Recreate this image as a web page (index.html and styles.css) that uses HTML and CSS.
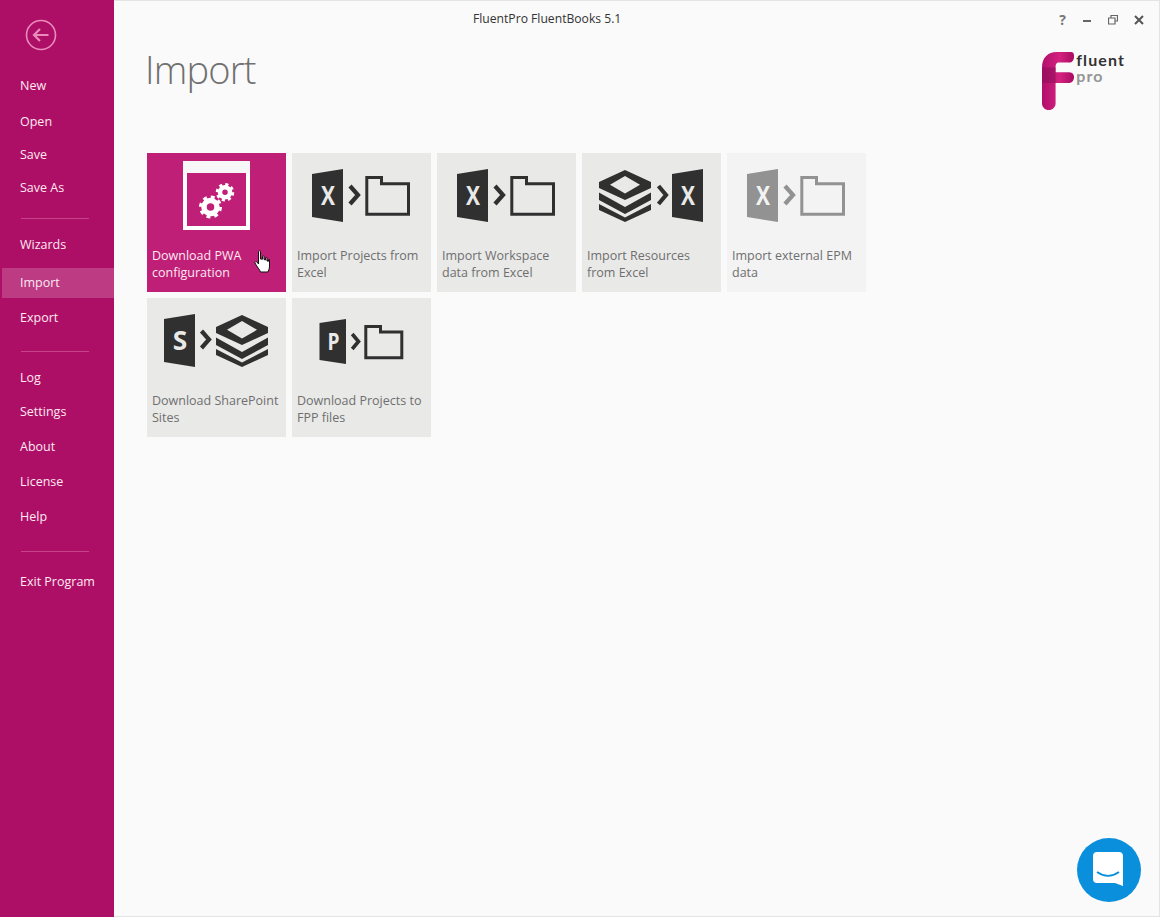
FILE: index.html
```html
<!DOCTYPE html>
<html lang="en">
<head>
<meta charset="utf-8">
<title>FluentPro FluentBooks 5.1</title>
<link rel="stylesheet" href="styles.css">
</head>
<body>
<svg class="sprite" width="0" height="0" aria-hidden="true">
  <defs>
    <symbol id="stack" viewBox="0 0 52 52">
      <path fill="currentColor" fill-rule="evenodd" d="M26 0 52 12V18L26 30 0 18V12ZM26 6 11 14.800 26 23.500 41 14.800Z"/>
      <path fill="currentColor" d="M0 22.500 26 37 52 22.500V30L26 44 0 30Z"/>
      <path fill="currentColor" d="M0 34 26 47.500 52 34V40L26 52 0 40Z"/>
    </symbol>
  </defs>
</svg>
<div class="window">
  <nav class="sidebar">
    <div class="back">
      <svg width="32" height="32" viewBox="0 0 32 32"><circle cx="16" cy="16" r="14.500" fill="none" stroke="#e98cbc" stroke-width="1.600"/><path d="M23.500 16H9M15 10l-6 6 6 6" fill="none" stroke="#e98cbc" stroke-width="2.200"/></svg>
    </div>
    <ul class="menu m-first">
      <li class="mi i-new">New</li>
      <li class="mi i-open">Open</li>
      <li class="mi i-save">Save</li>
      <li class="mi i-saveas">Save As</li>
    </ul>
    <hr class="sep">
    <ul class="menu">
      <li class="mi i-wiz">Wizards</li>
      <li class="mi active">Import</li>
      <li class="mi i-export">Export</li>
    </ul>
    <hr class="sep sep2">
    <ul class="menu">
      <li class="mi i-log">Log</li>
      <li class="mi i-set">Settings</li>
      <li class="mi i-std">About</li>
      <li class="mi i-std">License</li>
      <li class="mi i-std">Help</li>
    </ul>
    <hr class="sep sep3">
    <ul class="menu">
      <li class="mi i-exit">Exit Program</li>
    </ul>
  </nav>
  <main class="content">
    <div class="titlebar">
      <span class="apptitle">FluentPro FluentBooks 5.1</span>
      <div class="controls">
        <span class="help">?</span>
        <svg width="10" height="10" viewBox="0 0 10 10"><path d="M1 6h8" stroke="#666" stroke-width="2"/></svg>
        <svg width="10" height="10" viewBox="0 0 10 10"><path d="M3 2.500V.5h6.500v5.500H7.500M.5 3h6.500v6H.5Z" fill="none" stroke="#666" stroke-width="1.200"/></svg>
        <svg width="10" height="10" viewBox="0 0 10 10"><path d="M1 1l8 8M9 1l-8 8" stroke="#555" stroke-width="2"/></svg>
      </div>
    </div>
    <header class="head">
      <h1 class="title">Import</h1>
      <div class="logo">
        <svg class="logo-f" width="33" height="60" viewBox="0 0 34 60">
          <defs><linearGradient id="lg" x1="0" y1="0" x2="1" y2="0"><stop offset="0" stop-color="#b00f6c"/><stop offset=".55" stop-color="#d4217f"/><stop offset="1" stop-color="#a90d63"/></linearGradient></defs>
          <path fill="url(#lg)" d="M0 16C0 6 6 0 15 0H30C33 0 33 3 33 5S32 11 28 11H17C15 11 14 13 14 15V21H28C32 21 33 24 33 26S32 32 28 32H14V53C14 57 11 60 7 60S0 57 0 53Z"/>
          <path fill="#8d0c55" opacity=".55" d="M0 16H14V21H0ZM0 21H14V32H0Z"/>
        </svg>
        <div class="logo-text"><span class="lt1">fluent</span><span class="lt2">pro</span></div>
      </div>
    </header>
    <section class="tiles">
      <div class="tile hot">
        <svg class="ico" width="139" height="95" viewBox="0 0 139 95">
          <rect x="38" y="10" width="63" height="65" fill="none" stroke="#fff" stroke-width="4"/>
          <rect x="36" y="8" width="67" height="12" fill="#f7f7f7"/>
          <g fill="none" stroke="#fff">
            <circle cx="63.500" cy="54" r="6.500" stroke-width="5.500"/>
            <circle cx="63.500" cy="54" r="9.500" stroke-width="4" stroke-dasharray="3.700 3.760"/>
            <circle cx="78" cy="39.300" r="5" stroke-width="4.500"/>
            <circle cx="78" cy="39.300" r="7.500" stroke-width="3.500" stroke-dasharray="3 2.890"/>
          </g>
        </svg>
        <span class="lbl">Download PWA configuration</span>
        <svg class="hand" width="16" height="24" viewBox="0 0 16 24"><path fill="#fff" stroke="#111" stroke-width="1" stroke-linejoin="round" d="M4.500 1.500C4.500.5 6.500.5 6.500 1.500V9L8.500 9.200V6.500C8.500 5.500 10 5.500 10 6.500V9.500L11.500 10V8C11.500 7 13 7 13 8V11L14.500 11.200V10C14.500 9 15.500 9 15.500 10V17C15.500 19 14.500 20 14 22H6.500C6 20 3 17 1 13C.5 12 2 11 3 12L4.500 14Z"/></svg>
      </div>
      <div class="tile">
        <svg class="ico" width="139" height="95" viewBox="0 0 139 95">
          <path class="fillc" d="M20 21 51 16V69L20 64Z"/>
          <text x="36" y="51.500" class="gl" textLength="14" lengthAdjust="spacingAndGlyphs">X</text>
          <path class="chev" d="M58 33 66 42 58 51"/>
          <path class="line" d="M74.800 24.500H89.500V30.800H116.500V61.200H74.800Z"/>
        </svg>
        <span class="lbl">Import Projects from Excel</span>
      </div>
      <div class="tile">
        <svg class="ico" width="139" height="95" viewBox="0 0 139 95">
          <path class="fillc" d="M20 21 51 16V69L20 64Z"/>
          <text x="36" y="51.500" class="gl" textLength="14" lengthAdjust="spacingAndGlyphs">X</text>
          <path class="chev" d="M58 33 66 42 58 51"/>
          <path class="line" d="M74.800 24.500H89.500V30.800H116.500V61.200H74.800Z"/>
        </svg>
        <span class="lbl">Import Workspace data from Excel</span>
      </div>
      <div class="tile">
        <svg class="ico" width="139" height="95" viewBox="0 0 139 95">
          <use href="#stack" x="17" y="17" width="52" height="52"/>
          <path class="chev" d="M76.500 33 84 42 76.500 51"/>
          <path class="fillc" d="M90 21 121 16V69L90 64Z"/>
          <text x="106" y="51.500" class="gl" textLength="14" lengthAdjust="spacingAndGlyphs">X</text>
        </svg>
        <span class="lbl">Import Resources from Excel</span>
      </div>
      <div class="tile dim">
        <svg class="ico" width="139" height="95" viewBox="0 0 139 95">
          <path class="fillc" d="M20 21 51 16V69L20 64Z"/>
          <text x="36" y="51.500" class="gl gl-dim" textLength="14" lengthAdjust="spacingAndGlyphs">X</text>
          <path class="chev" d="M58 33 66 42 58 51"/>
          <path class="line" d="M74.800 24.500H89.500V30.800H116.500V61.200H74.800Z"/>
        </svg>
        <span class="lbl">Import external EPM data</span>
      </div>
      <div class="tile">
        <svg class="ico" width="139" height="95" viewBox="0 0 139 95">
          <path class="fillc" d="M17 21 48 16V69L17 64Z"/>
          <text x="33" y="51.500" class="gl" textLength="14.500" lengthAdjust="spacingAndGlyphs">S</text>
          <path class="chev" d="M54.500 33 62 41.500 54.500 50"/>
          <use href="#stack" x="69" y="17" width="52" height="52"/>
        </svg>
        <span class="lbl">Download SharePoint Sites</span>
      </div>
      <div class="tile">
        <svg class="ico" width="139" height="95" viewBox="0 0 139 95">
          <path class="fillc" d="M27.500 25 54 21V66L27.500 62Z"/>
          <text x="41.500" y="52" class="gl gl-p" textLength="12" lengthAdjust="spacingAndGlyphs">P</text>
          <path class="chev chev-s" d="M60.200 36 66.500 43.500 60.200 51"/>
          <path class="line" d="M73.800 28.500H88.500V34H109.800V59.800H73.800Z"/>
        </svg>
        <span class="lbl">Download Projects to FPP files</span>
      </div>
    </section>
  </main>
  <button class="chat" aria-label="Chat">
    <svg width="34" height="36" viewBox="0 0 34 36"><path fill="#fff" d="M5 0H27C29.500 0 31 1.500 31 4V34L23 31H5C2.500 31 1 29.500 1 27V4C1 1.500 2.500 0 5 0Z"/><path d="M5 20C12 25 20 25 27 20" fill="none" stroke="#0a8fdc" stroke-width="1.800"/></svg>
  </button>
</div>
</body>
</html>
```
FILE: styles.css
```css
* { box-sizing: border-box; }
html, body { margin: 0; padding: 0; height: 100%; }
body { font-family: "Open Sans", "Noto Sans", sans-serif; background: #fafafa; overflow: hidden; }
.sprite { position: absolute; }
.window { position: relative; display: flex; width: 1160px; height: 917px; background: #fafafa; border-top: 1px solid #e4e4e4; border-right: 1px solid #e4e4e4; border-bottom: 1px solid #e4e4e4; }
.sidebar { width: 114px; flex: none; background: #ae0f66; color: #fff; font-size: 12.500px; margin-top: -1px; margin-bottom: -1px; }
.back { padding: 19px 0 0 25px; height: 77px; }
.menu { list-style: none; margin: 0; padding: 0; }
.mi { padding-left: 20px; height: 18px; line-height: 18px; color: #fbe9f2; }
.i-open { margin-top: 18px; }
.i-save, .i-saveas { margin-top: 15px; }
.sep { border: 0; height: 1px; background: #c6438a; margin: 21px 25px 0 21px; }
.i-wiz { margin-top: 17px; }
.active { margin: 14px 0 0 2px; padding-left: 18px; height: 30px; line-height: 30px; background: #bc3b83; }
.i-export { margin-top: 11px; }
.sep2 { margin-top: 24px; }
.i-log { margin-top: 17px; }
.i-set { margin-top: 16px; }
.i-std { margin-top: 17px; }
.sep3 { margin-top: 25px; }
.i-exit { margin-top: 21px; }
.content { flex: 1; min-width: 0; display: flex; flex-direction: column; }
.titlebar { display: flex; align-items: center; height: 34px; padding-left: 359px; }
.apptitle { font-size: 12.150px; color: #333; }
.controls { margin-left: auto; margin-top: 3px; display: flex; align-items: center; gap: 16px; padding-right: 15px; }
.help { font-size: 14px; font-weight: 700; color: #777; }
.head { display: flex; justify-content: space-between; align-items: flex-start; padding-left: 31px; padding-right: 34px; height: 118px; }
.title { margin: 9px 0 0; font-family: "Open Sans", sans-serif; font-weight: 300; font-size: 38px; line-height: 50px; color: #707070; letter-spacing: -.8px; }
.logo { display: flex; align-items: flex-start; gap: 1px; margin-top: 16px; }
.logo-text { display: flex; flex-direction: column; font-family: "Lato", sans-serif; font-weight: 700; line-height: 15.500px; margin-top: 1px; }
.lt1 { font-size: 16px; color: #333; letter-spacing: 1.100px; }
.lt2 { font-size: 16px; color: #969696; letter-spacing: 1.100px; }
.tiles { display: grid; grid-template-columns: repeat(5, 139px); grid-auto-rows: 139px; gap: 6px; padding-left: 33px; }
.tile { position: relative; display: flex; flex-direction: column; background: #e9e9e8; color: #303030; font-size: 12.500px; }
.ico { display: block; flex: none; }
.lbl { display: block; padding: 0 5px; margin-top: -1px; line-height: 17px; color: #6f6f6f; }
.fillc { fill: #303030; }
.line { fill: none; stroke: #303030; stroke-width: 3; }
.chev { fill: none; stroke: #303030; stroke-width: 4.200; }
.chev-s { stroke-width: 3.600; }
.gl { font-family: "Open Sans", sans-serif; font-weight: 700; font-size: 26px; fill: #e9e9e8; text-anchor: middle; }
.gl-p { font-size: 23px; }
.dim { background: #f3f3f3; }
.dim .fillc { fill: #929292; }
.dim .line, .dim .chev { stroke: #929292; }
.gl-dim { fill: #f3f3f3; }
.hot { background: #bf1f77; }
.hot .lbl { color: #fde9f3; }
.hand { position: absolute; left: 107px; top: 97px; }
.chat { position: absolute; left: 1077px; top: 837px; width: 64px; height: 64px; border: 0; padding: 0; border-radius: 50%; background: #0a8fdc; display: flex; align-items: center; justify-content: center; }
```
